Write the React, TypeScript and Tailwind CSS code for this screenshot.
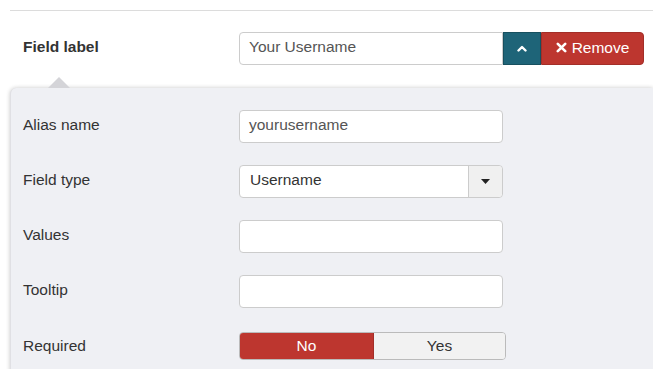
export default function App() {
  const rows = [
    { label: 'Alias name', value: 'yourusername' },
    { label: 'Field type', select: 'Username' },
    { label: 'Values', value: '' },
    { label: 'Tooltip', value: '' },
  ]
  return (
    <div className="w-[653px] h-[369px] overflow-hidden bg-white text-[15.5px] text-[#333] font-['Liberation_Sans',Arial,sans-serif]">
      <div className="ml-[10px] pt-[10px]">
        <div className="border-t border-[#dcdcdc]" />
        {/* header row */}
        <div className="flex items-center h-[33px] mt-[21px]">
          <div className="w-[229px] pl-[13px] pb-[3px] font-bold">Field label</div>
          <div className="flex h-[33px]">
            <div className="w-[264px] h-full flex items-center px-[9px] pb-[3px] bg-white border border-[#ccc] rounded-l-[4px] text-[#555]">
              Your Username
            </div>
            <button className="w-[38px] h-full flex items-center justify-center bg-[#1e6478] border border-[#17505f]">
              <svg width="10" height="7" viewBox="0 0 10 7">
                <path d="M1.5 5.5 L5 2 L8.5 5.5" fill="none" stroke="white" strokeWidth="2.4" strokeLinecap="round" strokeLinejoin="round" />
              </svg>
            </button>
            <button className="w-[103px] h-full flex items-center justify-center gap-[5px] pb-[2px] bg-[#bd362f] border border-[#a32e28] rounded-r-[4px] text-white">
              <svg width="11" height="11" viewBox="0 0 11 11">
                <path d="M1.8 1.8 L9.2 9.2 M9.2 1.8 L1.8 9.2" stroke="white" strokeWidth="2.6" strokeLinecap="round" />
              </svg>
              Remove
            </button>
          </div>
        </div>
        {/* panel */}
        <div className="relative mt-[23px] h-[300px] bg-[#eff0f4] rounded-tl-[6px] shadow-[0_0_4px_rgba(0,0,0,0.22)] border-l border-[#e0e0e4]">
          <div className="absolute left-[37px] top-[-11px] w-0 h-0 border-x-[11px] border-x-transparent border-b-[11px] border-b-[#d4d4d8]" />
          <div className="flex flex-col gap-[22px] pt-[22px]">
            {rows.map((r) => (
              <div key={r.label} className="flex items-center h-[33px]">
                <div className="w-[228px] pl-[12px] pb-[3px]">{r.label}</div>
                {r.select ? (
                  <div className="w-[264px] h-[33px] flex bg-white border border-[#ccc] rounded-[4px] text-[#333]">
                    <div className="flex-1 flex items-center pl-[10px] pb-[3px]">{r.select}</div>
                    <div className="w-[34px] flex items-center justify-center bg-[#f0f0f0] border-l border-[#ccc] rounded-r-[4px]">
                      <svg width="9" height="5" viewBox="0 0 9 5">
                        <path d="M0 0 H9 L4.5 5 Z" fill="#222" />
                      </svg>
                    </div>
                  </div>
                ) : (
                  <div className="w-[264px] h-[33px] flex items-center px-[9px] pb-[3px] bg-white border border-[#ccc] rounded-[4px] text-[#555]">
                    {r.value}
                  </div>
                )}
              </div>
            ))}
            <div className="flex items-center h-[28px] mt-[2px]">
              <div className="w-[228px] pl-[12px]">Required</div>
              <div className="w-[267px] h-[28px] flex rounded-[4px] border border-[#bbb] overflow-hidden">
                <div className="w-[134px] flex items-center justify-center bg-[#bd362f] text-white border-r border-[#a32e28]">No</div>
                <div className="flex-1 flex items-center justify-center bg-[#f2f2f2] text-[#333]">Yes</div>
              </div>
            </div>
          </div>
        </div>
      </div>
    </div>
  )
}
